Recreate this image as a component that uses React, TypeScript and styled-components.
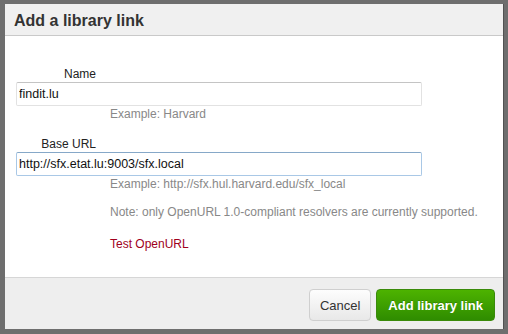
import * as React from "react";
import styled, { createGlobalStyle } from "styled-components";

const GlobalStyle = createGlobalStyle`
  html, body {
    margin: 0;
    padding: 0;
    background: #6e6e6e;
    font-family: "Liberation Sans", Arial, sans-serif;
  }
`;

export default function App() {
  return (
    <>
      <GlobalStyle />
      <Backdrop>
        <Modal>
          <Header>
            <Title>Add a library link</Title>
          </Header>
          <Body>
            <Field>
              <Label>Name</Label>
              <Input defaultValue="findit.lu" />
              <Hint>Example: Harvard</Hint>
            </Field>
            <Field>
              <Label>Base URL</Label>
              <Input focused defaultValue="http://sfx.etat.lu:9003/sfx.local" />
              <Hint>Example: http://sfx.hul.harvard.edu/sfx_local</Hint>
              <Hint spaced>
                Note: only OpenURL 1.0-compliant resolvers are currently supported.
              </Hint>
              <TestLink href="#">Test OpenURL</TestLink>
            </Field>
          </Body>
          <Footer>
            <Button>Cancel</Button>
            <Button primary>Add library link</Button>
          </Footer>
        </Modal>
      </Backdrop>
    </>
  );
}

// css
const Backdrop = styled.div`
  width: 508px;
  height: 334px;
  padding: 4px 5px 0 5px;
  box-sizing: border-box;
`;

const Modal = styled.div`
  width: 498px;
  height: 325px;
  background: #fff;
  display: flex;
  flex-direction: column;
  box-shadow: 1px 0 0 rgba(0, 0, 0, 0.25);
`;

const Header = styled.div`
  background: #f0f0f0;
  border-bottom: 1px solid #c9c9c9;
  padding: 7px 9px 4px 9px;
`;

const Title = styled.h3`
  margin: 0;
  font-size: 16px;
  line-height: 20px;
  font-weight: bold;
  color: #333;
`;

const Body = styled.div`
  flex: 1;
  padding: 31px 0 0 11px;
  display: flex;
  flex-direction: column;
  gap: 16px;
`;

const Field = styled.div`
  display: flex;
  flex-direction: column;
  align-items: flex-start;
`;

const Label = styled.label`
  width: 80px;
  text-align: right;
  font-size: 12px;
  line-height: 14px;
  color: #222;
  margin-bottom: 1px;
`;

const Input = styled.input<{ focused?: boolean }>`
  width: 406px;
  height: 24px;
  box-sizing: border-box;
  padding: 0 2px;
  font-family: "Liberation Sans", Arial, sans-serif;
  font-size: 12.5px;
  color: #111;
  border: 1px solid ${(p) => (p.focused ? "#a9c8e6" : "#e2e2e2")};
  border-top-color: ${(p) => (p.focused ? "#86a8c8" : "#c4c4c4")};
  border-radius: 2px;
  outline: none;
  background: #fff;
`;

const Hint = styled.div<{ spaced?: boolean }>`
  margin: ${(p) => (p.spaced ? "14px" : "1px")} 0 0 94px;
  font-size: 12px;
  line-height: 14px;
  color: #888;
`;

const TestLink = styled.a`
  margin: 18px 0 0 94px;
  font-size: 12px;
  line-height: 14px;
  color: #a0001c;
  text-decoration: none;
`;

const Footer = styled.div`
  background: #eee;
  border-top: 1px solid #d6d6d6;
  padding: 11px 8px 0 8px;
  box-sizing: border-box;
  height: 52px;
  display: flex;
  justify-content: flex-end;
  align-items: flex-start;
  gap: 5px;
`;

const Button = styled.button<{ primary?: boolean }>`
  height: 32px;
  padding: 0 ${(p) => (p.primary ? "11px" : "10px")};
  border-radius: 4px;
  font-family: "Liberation Sans", Arial, sans-serif;
  font-size: 13px;
  font-weight: ${(p) => (p.primary ? "bold" : "normal")};
  color: ${(p) => (p.primary ? "#fff" : "#333")};
  border: 1px solid ${(p) => (p.primary ? "#3a8a0a" : "#cfcfcf")};
  background: ${(p) =>
    p.primary
      ? "linear-gradient(#4db300, #2f8c00)"
      : "linear-gradient(#fdfdfd, #e8e8e8)"};
  text-shadow: ${(p) => (p.primary ? "0 -1px 0 rgba(0,0,0,0.2)" : "none")};
  cursor: pointer;
`;
